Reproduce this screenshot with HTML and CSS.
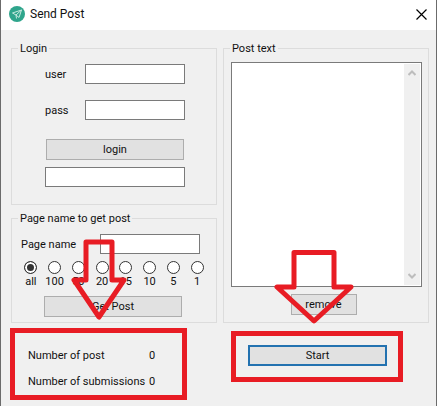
FILE: index.html
```html
<!DOCTYPE html>
<html lang="en">
<head>
  <meta charset="UTF-8">
  <meta name="viewport" content="width=device-width, initial-scale=1.0">
  <title>Send Post</title>
  <link rel="stylesheet" href="styles.css">
</head>
<body>
  <div class="window">
    <header class="titlebar">
      <svg class="logo" width="16" height="16" viewBox="0 0 16 16">
        <circle cx="8" cy="8" r="8" fill="#2fa58c"/>
        <path d="M3.5 7 L12.5 4 L10 11.5 M7 9 L12.5 4 M3.5 7 L7 9 L7.5 12.5 M7 9 L10 11.5" fill="none" stroke="#c5e9df" stroke-width="1"/>
      </svg>
      <h1>Send Post</h1>
      <button class="close" aria-label="Close">
        <svg width="11" height="11" viewBox="0 0 11 11">
          <path d="M.5 .5 L10.5 10.5 M10.5 .5 L.5 10.5" stroke="#000" stroke-width="1.2"/>
        </svg>
      </button>
    </header>

    <main class="content">
      <fieldset class="login">
        <legend>Login</legend>
        <div class="field">
          <label for="user">user</label>
          <input type="text" id="user">
        </div>
        <div class="field">
          <label for="pass">pass</label>
          <input type="password" id="pass">
        </div>
        <button class="login-btn">login</button>
        <input type="text" class="status" aria-label="Login status">
      </fieldset>

      <fieldset class="post">
        <legend>Post text</legend>
        <div class="textbox">
          <textarea aria-label="Post text"></textarea>
          <div class="scrollbar">
            <svg width="8" height="6" viewBox="0 0 8 6"><path d="M.5 5 L4 1.5 L7.5 5" fill="none" stroke="#bdbdbd" stroke-width="2"/></svg>
            <svg width="8" height="6" viewBox="0 0 8 6"><path d="M.5 1 L4 4.5 L7.5 1" fill="none" stroke="#bdbdbd" stroke-width="2"/></svg>
          </div>
        </div>
        <button class="remove">remove</button>
      </fieldset>

      <fieldset class="page">
        <legend>Page name to get post</legend>
        <div class="field">
          <label for="page">Page name</label>
          <input type="text" id="page">
        </div>
        <div class="counts">
          <label><input type="radio" name="count" checked>all</label>
          <label><input type="radio" name="count">100</label>
          <label><input type="radio" name="count">50</label>
          <label><input type="radio" name="count">20</label>
          <label><input type="radio" name="count">15</label>
          <label><input type="radio" name="count">10</label>
          <label><input type="radio" name="count">5</label>
          <label><input type="radio" name="count">1</label>
        </div>
        <button class="get-post">Get Post</button>
      </fieldset>

      <div class="callout totals">
        <svg class="arrow" width="60" height="82" viewBox="0 0 60 82">
          <path d="M17 3 H43 V41 H55 L30 78 L5 41 H17 Z"/>
        </svg>
        <dl>
          <dt>Number of post</dt>
          <dd>0</dd>
          <dt>Number of submissions</dt>
          <dd>0</dd>
        </dl>
      </div>

      <div class="callout run">
        <svg class="arrow" width="86" height="74" viewBox="0 0 86 74">
          <path d="M23 2.5 H63 V37 H80 L43 71 L6 37 H23 Z"/>
        </svg>
        <button class="start">Start</button>
      </div>
    </main>
  </div>
</body>
</html>
```
FILE: styles.css
```css
* {
  box-sizing: border-box;
}
body {
  margin: 0;
  font-family: Roboto, "Liberation Sans", sans-serif;
  font-size: 11px;
  line-height: 15px;
  color: #111;
  background-color: #f0f0f0;
}
.window {
  min-height: 100vh;
  border-left: 1px solid #6b6b6b;
  border-right: 1px solid #6b6b6b;
}
.titlebar {
  display: flex;
  align-items: center;
  height: 30px;
  padding: 0 9px 2px 8px;
  background-color: #fff;
}
.titlebar h1 {
  flex: 1;
  margin: 0 0 0 5px;
  font-size: 12px;
  font-weight: normal;
}
.titlebar .close {
  display: flex;
  width: 11px;
  height: 11px;
  padding: 0;
  border: none;
  background: none;
}
.content {
  display: grid;
  grid-template-columns: minmax(0, 1fr) minmax(0, 1fr);
  column-gap: 6px;
  padding: 11px 7px 6px 10px;
}
fieldset {
  display: flex;
  flex-direction: column;
  min-width: 0;
  margin: 0;
  padding: 0;
  border: 1px solid #dcdcdc;
}
legend {
  padding: 0 2px;
}
button {
  height: 21px;
  padding: 0;
  border: 1px solid #adadad;
  background-color: #e1e1e1;
  font: inherit;
  color: inherit;
}
input[type="text"],
input[type="password"] {
  min-width: 0;
  height: 20px;
  padding: 0 3px;
  border: 1px solid #7a7a7a;
  background-color: #fff;
  font: inherit;
}
.field {
  display: flex;
  align-items: center;
}
.field input {
  flex: 1;
}

.login {
  padding: 8px 31px 17px 33px;
}
.login legend {
  margin-left: -27px;
}
.login .field {
  margin-bottom: 16px;
}
.login .field label {
  width: 40px;
}
.login-btn {
  margin: 3px 1px 7px;
}

.post {
  grid-column: 2;
  grid-row: 1 / 3;
  padding: 6px 6px 7px 7px;
}
.post legend {
  margin-left: -1px;
}
.textbox {
  display: flex;
  flex: 1;
  padding: 1px;
  border: 1px solid #7a7a7a;
  background-color: #fff;
}
.textbox textarea {
  flex: 1;
  min-width: 0;
  padding: 2px;
  border: none;
  outline: none;
  resize: none;
  font: inherit;
}
.scrollbar {
  display: flex;
  flex-direction: column;
  justify-content: space-between;
  align-items: center;
  width: 16px;
  padding: 6px 0;
  background-color: #f0f0f0;
}
.remove {
  align-self: center;
  width: 66px;
  margin: 7px 6px 0 0;
}

.page {
  margin-top: 6px;
  padding: 8px 7px 5px;
}
.page legend {
  margin-left: -1px;
}
.page .field {
  margin: 0 9px 7px 2px;
}
.page .field label {
  width: 79px;
}
.counts {
  display: grid;
  grid-template-columns: repeat(8, 1fr);
}
.counts label {
  display: flex;
  flex-direction: column;
  align-items: center;
}
.counts input {
  appearance: none;
  width: 13px;
  height: 13px;
  margin: 0;
  border: 1px solid #333;
  border-radius: 50%;
  background-color: #fff;
}
.counts input:checked {
  background-color: #333;
  box-shadow: inset 0 0 0 2px #fff;
}
.get-post {
  margin: 7px 27px 0 25px;
}

.callout {
  position: relative;
  border: 5px solid #e81c24;
}
.arrow {
  position: absolute;
  bottom: 100%;
  fill: none;
  stroke: #e81c24;
  stroke-width: 5;
  stroke-linejoin: round;
}
.totals {
  margin: 5px 30px 0 -1px;
  padding: 15px 13px 6px;
}
.totals .arrow {
  left: 54px;
  margin-bottom: 12px;
}
.totals dl {
  display: grid;
  grid-template-columns: 1fr 20px;
  row-gap: 11px;
  margin: 0;
}
.totals dt {
  white-space: nowrap;
}
.totals dd {
  margin: 0;
}
.run {
  align-self: start;
  margin: 8px 26px 0 8px;
  padding: 9px 11px 11px 12px;
}
.run .arrow {
  left: 35px;
  margin-bottom: 12px;
}
.start {
  display: block;
  width: 100%;
  border: 2px solid #2372b0;
}
```
